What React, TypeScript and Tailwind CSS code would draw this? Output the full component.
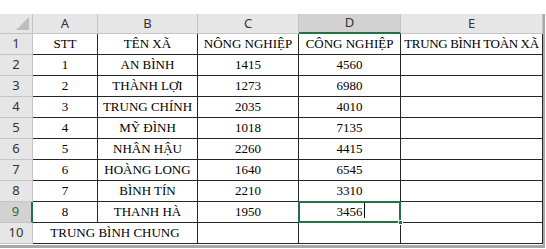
const rows = [
  ["STT", "TÊN XÃ", "NÔNG NGHIỆP", "CÔNG NGHIỆP", "TRUNG BÌNH TOÀN XÃ"],
  ["1", "AN BÌNH", "1415", "4560", ""],
  ["2", "THÀNH LỢI", "1273", "6980", ""],
  ["3", "TRUNG CHÍNH", "2035", "4010", ""],
  ["4", "MỸ ĐÌNH", "1018", "7135", ""],
  ["5", "NHÂN HẬU", "2260", "4415", ""],
  ["6", "HOÀNG LONG", "1640", "6545", ""],
  ["7", "BÌNH TÍN", "2210", "3310", ""],
  ["8", "THANH HÀ", "1950", "3456", ""],
]

const cols = ["A", "B", "C", "D", "E"]

const hdr = "flex items-center justify-center bg-[#e6e6e6] border-r border-b border-[#c4c4c4] text-[13px] text-[#333] font-['Noto_Sans',sans-serif]"
const cell = "relative flex items-center justify-center border-r border-b border-[#262626] text-[13px] text-black font-['Liberation_Serif',serif] whitespace-nowrap"

export default function App() {
  return (
    <div className="w-[546px] h-[249px] bg-white overflow-hidden pt-[14px]">
      <div className="flex">
        <div className="relative grid grid-cols-[33px_65px_100px_101px_102px_142px] grid-rows-[20px_repeat(10,21px)]">
          {/* corner */}
          <div className="relative bg-[#e6e6e6] border-r border-b border-[#c4c4c4]">
            <div className="absolute right-[3px] bottom-[3px] w-0 h-0 border-l-[13px] border-l-transparent border-b-[13px] border-b-[#bdbdbd]" />
          </div>
          {cols.map((c) =>
            c === "D" ? (
              <div key={c} className="flex items-center justify-center bg-[#d2d2d2] border-r border-[#c4c4c4] border-b-2 border-b-[#217346] text-[13px] text-[#333] font-['Noto_Sans',sans-serif]">
                {c}
              </div>
            ) : (
              <div key={c} className={hdr}>{c}</div>
            )
          )}

          {rows.map((r, i) => (
            <>
              {i === 8 ? (
                <div key={"h" + i} className="flex items-center justify-center bg-[#d2d2d2] border-b border-[#c4c4c4] border-r-2 border-r-[#217346] text-[13px] text-[#217346] font-['Noto_Sans',sans-serif]">
                  {i + 1}
                </div>
              ) : (
                <div key={"h" + i} className={hdr}>{i + 1}</div>
              )}
              {r.map((v, j) => (
                <div key={i + "-" + j} className={cell + (j === 4 ? " tracking-[-0.35px]" : "")}>
                  {i === 8 && j === 3 ? (
                    <span className="relative">
                      {v}
                      <span className="absolute -right-[2px] top-[1px] w-px h-[15px] bg-black" />
                    </span>
                  ) : (
                    v
                  )}
                </div>
              ))}
            </>
          ))}

          <div className={hdr}>10</div>
          <div className={cell + " col-span-2"}>TRUNG BÌNH CHUNG</div>
          <div className={cell} />
          <div className={cell} />
          <div className={cell} />

          {/* active cell D9 */}
          <div className="absolute left-[298px] top-[187px] w-[103px] h-[22px] border-2 border-[#217346] pointer-events-none">
            <div className="absolute -right-[4px] -bottom-[4px] w-[5px] h-[5px] bg-[#217346] border border-white" />
          </div>
        </div>
        <div className="w-[2px] h-[231px] bg-[#a8a8a8]" />
      </div>
      <div className="w-[545px] h-[3px] bg-[#a8a8a8]" />
    </div>
  )
}
